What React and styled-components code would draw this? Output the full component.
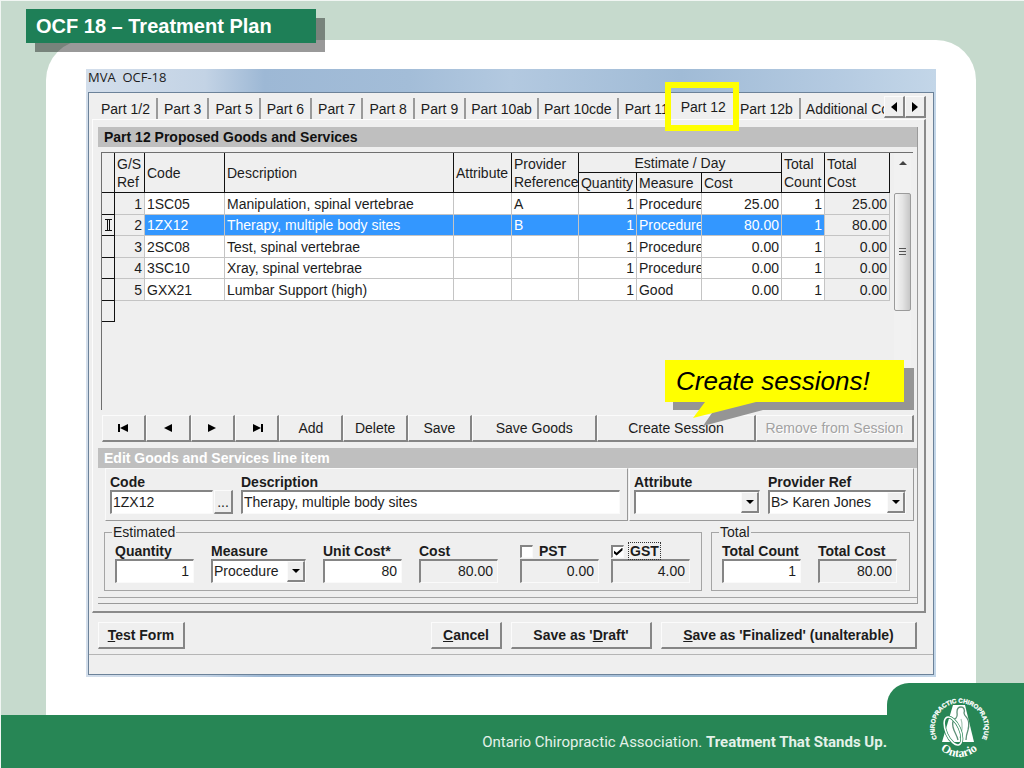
import React, { useState } from 'react';
import styled, { createGlobalStyle, css } from 'styled-components';

const GlobalStyle = createGlobalStyle`
*{box-sizing:border-box;}
body{
  margin:0;
  color:#1c1c1c;
  font-family:"Liberation Sans",Arial,sans-serif;
  font-size:14px;
  line-height:16px;
}
button,input,select{
  font:inherit;
  color:inherit;
  margin:0;
}
`;

const raised = css`
border:1px solid #fbfbfb;
border-right:2px solid #858585;
border-bottom:2px solid #858585;
background:#efefef;
`;
const sunken = css`
border:1px solid #fafafa;
border-left:2px solid #858585;
border-top:2px solid #858585;
`;

const Slide = styled.div`
min-height:100vh;
display:flex;
flex-direction:column;
background:#c6dacd;
border-top:1px solid #f1f6f3;
border-left:1px solid #f1f6f3;
`;
const SlideTitle = styled.h1`
position:relative;
z-index:1;
align-self:flex-start;
width:290px;
margin:8px 0 0 25px;
padding:0 10px;
background:#1e7f57;
box-shadow:9px 9px 0 rgba(0,0,0,0.4);
color:#fff;
font-size:20px;
line-height:34px;
`;
const Sheet = styled.main`
flex:1;
margin:-3px 48px 0 45px;
padding:29px 40px 38px;
background:#fff;
border-radius:40px 40px 0 0;
`;

const Window = styled.div`
padding:0 2px 2px;
background:linear-gradient(90deg,#d3deeb 0,#c3d3e5 14%,#9db8d5 21%,#a3bdd8 38%,#b3c9e0 50%,#a0bbd6 70%,#b4cae1 88%,#c3d6e8 100%);
`;
const TitleBar = styled.div`
height:23px;
white-space:pre;
font-family:"Open Sans","Noto Sans",sans-serif;
font-size:13px;
line-height:17px;
`;
const WindowBody = styled.div`
border:1px solid #6c8299;
background:#efefef;
`;

const TabStrip = styled.div`
display:flex;
height:26px;
padding:3px 7px 0 6px;
`;
const TabList = styled.div`
flex:1;
display:flex;
min-width:0;
padding-top:2px;
overflow-x:clip;
`;
const Tab = styled.button`
flex:none;
height:21px;
padding:${(p) => (p.$tight ? "0 5px" : "0 6px")};
border:0;
border-right:2px solid ${(p) => (p.$active ? "#efefef" : "#9a9a9a")};
background:#efefef;
white-space:nowrap;
${(p) => p.$active && css`
position:relative;
z-index:1;
height:24px;
margin:-3px -3px 0 -5px;
padding:0 9px 1px;
&::after{
  content:"";
  position:absolute;
  inset:-13px -4px -12px -7px;
  border:6px solid #ffff00;
  pointer-events:none;
}
`}
`;
const TabScroll = styled.button`
${raised}
width:21px;
height:22px;
padding:0;
display:grid;
place-items:center;
`;

const TabPage = styled.div`
margin:0 7px 0 3px;
padding:7px 6px 7px 5px;
border:1px solid #fdfdfd;
border-right:2px solid #8a8a8a;
border-bottom:2px solid #8a8a8a;
`;
const Group = styled.section`
padding-bottom:5px;
border-right:1px solid #9a9a9a;
border-bottom:1px solid #9a9a9a;
`;
const Band = styled.h2`
margin:0;
padding:0 6px;
background:#bfbfbf;
color:${(p) => (p.$light ? "#fff" : "#111")};
font-size:14px;
line-height:20px;
`;

const GridArea = styled.div`
position:relative;
display:flex;
align-items:flex-start;
height:258px;
margin:5px 4px 0 3px;
border-top:1px solid #6f6f6f;
border-left:1px solid #6f6f6f;
`;
const Grid = styled.table`
flex:1;
width:100%;
border-collapse:separate;
border-spacing:0;
table-layout:fixed;
`;
const Th = styled.th`
height:20px;
padding:0 2px;
border-right:1px solid #111;
border-bottom:1px solid #111;
font-weight:400;
line-height:18px;
text-align:${(p) => p.$align || "left"};
white-space:nowrap;
`;
const Row = styled.tr`
height:21px;
&:nth-child(odd){height:22px;}
`;
const Td = styled.td`
padding:0 2px;
border-right:1px solid #c4c4c4;
border-bottom:1px solid #c4c4c4;
background:${(p) => (p.$selected ? "#3397ff" : p.$locked ? "#efefef" : "#fff")};
color:${(p) => (p.$selected ? "#fff" : "inherit")};
line-height:20px;
text-align:${(p) => p.$align || "left"};
white-space:nowrap;
overflow:hidden;
`;
const Marker = styled.td`
padding:0;
border-right:1px solid #111;
border-bottom:1px solid #111;
line-height:0;
text-align:center;
`;

const ScrollBar = styled.div`
align-self:stretch;
width:17px;
margin:0 2px 0 4px;
padding-top:8px;
display:flex;
flex-direction:column;
align-items:center;
gap:28px;
background:#f1f1f1;
`;
const Thumb = styled.div`
width:17px;
height:118px;
display:grid;
place-items:center;
border:1px solid #9b9b9b;
border-radius:2px;
background:linear-gradient(90deg,#f4f4f4,#e4e4e4 50%,#c6c6c6);
`;

const Callout = styled.div`
position:absolute;
top:207px;
right:-1px;
width:249px;
height:64px;
pointer-events:none;
svg{display:block;}
`;
const CalloutText = styled.p`
position:absolute;
top:0;
left:11px;
margin:0;
color:#000;
font-size:26px;
font-style:italic;
line-height:42px;
`;

const Toolbar = styled.div`
display:flex;
margin:5px 3px 6px 4px;
`;
const ToolButton = styled.button`
${raised}
flex:1 1 ${(p) => p.$width}px;
min-width:0;
height:27px;
padding:0;
white-space:nowrap;
&:disabled{
  color:#a2a2a2;
  text-shadow:1px 1px 0 #fff;
}
`;

const EditArea = styled.div`
padding-bottom:6px;
border-bottom:1px solid #a5a5a5;
`;
const PanelRow = styled.div`
display:flex;
gap:1px;
margin:0 3px 0 7px;
`;
const Panel = styled.div`
flex:${(p) => (p.$width ? "none" : 1)};
width:${(p) => (p.$width ? p.$width + "px" : "auto")};
display:flex;
align-items:flex-end;
gap:8px;
padding:5px 7px 6px 4px;
border:1px solid #fafafa;
border-right-color:#999;
border-bottom-color:#999;
`;
const Boxes = styled.div`
display:flex;
gap:9px;
margin:3px 7px 0 6px;
`;
const Box = styled.fieldset`
flex:${(p) => (p.$width ? "none" : 1)};
width:${(p) => (p.$width ? p.$width + "px" : "auto")};
min-width:0;
margin:0;
padding:3px 11px 7px 10px;
border:1px solid #a5a5a5;
`;
const Legend = styled.legend`
margin-left:-3px;
padding:0 1px;
`;
const Fields = styled.div`
display:flex;
gap:17px;
`;
const TaxFields = styled.div`
display:flex;
gap:12px;
margin-left:auto;
`;
const Field = styled.div`
flex:${(p) => (p.$width ? "none" : 1)};
width:${(p) => (p.$width ? p.$width + "px" : "auto")};
min-width:0;
`;
const Label = styled.label`
display:block;
height:16px;
font-weight:700;
line-height:16px;
white-space:nowrap;
`;
const Input = styled.input`
${sunken}
display:block;
width:100%;
height:24px;
padding:0 4px 1px 1px;
border-radius:0;
background:${(p) => (p.readOnly ? "#efefef" : "#fff")};
text-align:${(p) => p.$align || "left"};
outline:none;
`;
const Lookup = styled.div`
display:flex;
gap:1px;
`;
const LookupButton = styled.button`
${raised}
flex:none;
width:19px;
height:24px;
padding:0;
`;
const SelectWrap = styled.div`
${sunken}
display:grid;
height:24px;
background:#fff;
`;
const SelectInput = styled.select`
grid-area:1/1;
width:100%;
padding:0 0 1px 1px;
border:0;
border-radius:0;
background:transparent;
appearance:none;
outline:none;
`;
const SelectArrow = styled.span`
${raised}
grid-area:1/1;
justify-self:end;
width:18px;
display:grid;
place-items:center;
pointer-events:none;
`;
const CheckRow = styled.label`
display:flex;
align-items:center;
gap:5px;
height:16px;
font-weight:700;
`;
const CheckInput = styled.input`
${sunken}
appearance:none;
display:grid;
place-content:center;
width:13px;
height:13px;
background:#fff;
&:checked::before{
  content:"";
  width:9px;
  height:8px;
  background:#000;
  clip-path:polygon(0 35%,35% 65%,100% 0,100% 35%,35% 100%,0 70%);
}
`;
const CheckText = styled.span`
padding:0 1px;
outline:${(p) => (p.$focused ? "1px dotted #333" : "none")};
`;

const Actions = styled.div`
display:flex;
justify-content:flex-end;
gap:9px;
margin:9px 16px 5px 9px;
`;
const Action = styled.button`
${raised}
width:${(p) => p.$width}px;
height:27px;
margin-right:${(p) => (p.$first ? "auto" : "0")};
padding:0;
font-weight:700;
white-space:nowrap;
`;
const StatusBar = styled.div`
height:20px;
border-top:1px solid #b5b5b5;
`;

const Footer = styled.footer`
display:flex;
align-items:flex-start;
justify-content:flex-end;
height:53px;
background:#278655;
color:#e4f1e9;
font-family:Roboto,"Liberation Sans",sans-serif;
font-size:15px;
`;
const Tagline = styled.p`
margin:19px 0 0;
`;
const Badge = styled.div`
width:137px;
height:85px;
margin-top:-32px;
padding:8px 0 0 37px;
border-radius:22px 0 0 0;
background:#278655;
`;

const tabs = ["Part 1/2", "Part 3", "Part 5", "Part 6", "Part 7", "Part 8", "Part 9", "Part 10ab", "Part 10cde", "Part 11", "Part 12", "Part 12b", "Additional Comments"];

const columns = [13, 30, 80, null, 58, 67, 58, 65, 80, 43, 65];

const lines = [
  { ref: 1, code: "1SC05", desc: "Manipulation, spinal vertebrae", provider: "A", measure: "Procedure", cost: "25.00" },
  { ref: 2, code: "1ZX12", desc: "Therapy, multiple body sites", provider: "B", measure: "Procedure", cost: "80.00" },
  { ref: 3, code: "2SC08", desc: "Test, spinal vertebrae", provider: "", measure: "Procedure", cost: "0.00" },
  { ref: 4, code: "3SC10", desc: "Xray, spinal vertebrae", provider: "", measure: "Procedure", cost: "0.00" },
  { ref: 5, code: "GXX21", desc: "Lumbar Support (high)", provider: "", measure: "Good", cost: "0.00" },
];

const Triangle = ({ dir, bar }) => (
  <svg width="14" height="10" viewBox="0 0 14 10" aria-hidden="true">
    <g transform={dir === "left" ? "translate(14 0) scale(-1 1)" : undefined} fill="#000">
      <path d="M3 1 L11 5 L3 9 Z" />
      {bar && <path d="M11 1h2v8h-2z" />}
    </g>
  </svg>
);

// the tab scrollers use a taller, narrower arrow than the record navigator
const ScrollTriangle = ({ dir }) => (
  <svg width="8" height="12" viewBox="0 0 8 12" aria-hidden="true">
    <path d={dir === "left" ? "M7 1v10L1 6z" : "M1 1v10l6-5z"} fill="#000" />
  </svg>
);

const DownArrow = () => (
  <svg width="8" height="4" viewBox="0 0 8 4" aria-hidden="true">
    <path d="M0 0h8L4 4z" fill="#000" />
  </svg>
);

const Select = ({ id, options }) => (
  <SelectWrap>
    <SelectInput id={id} defaultValue={options[0]}>
      {options.map((o) => <option key={o}>{o}</option>)}
    </SelectInput>
    <SelectArrow><DownArrow /></SelectArrow>
  </SelectWrap>
);

const NumberField = ({ id, label, value, locked }) => (
  <Field $width={79}>
    <Label htmlFor={id}>{label}</Label>
    <Input id={id} $align="right" defaultValue={value} readOnly={locked} />
  </Field>
);

const TaxField = ({ id, label, value, checked, focused }) => {
  const [on, setOn] = useState(checked);
  return (
    <Field $width={79}>
      <CheckRow>
        <CheckInput type="checkbox" checked={on} onChange={() => setOn(!on)} />
        <CheckText $focused={focused}>{label}</CheckText>
      </CheckRow>
      <Input id={id} aria-label={label + " amount"} $align="right" defaultValue={value} readOnly />
    </Field>
  );
};

const Logo = () => (
  <svg width="70" height="72" viewBox="0 0 70 72" role="img" aria-label="Ontario Chiropractic">
    <defs>
      <path id="ring" d="M13.4 48.5 A25 25 0 1 1 57.6 48.5" />
      <path id="base" d="M12 55 Q35 77 58 55" />
    </defs>
    <path d="M29 14h12l9 37H18z" fill="#fff" />
    <path d="M33 21c0-3 1-5 4-5s4 3 3 6c0 2 1 3 3 5 2 3 2 8 1 12-1 3-2 6-2 10" fill="none" stroke="#5c8f76" strokeWidth="1.3" />
    <path d="M33 21c0 3 1 4-1 6-3 2-4 5-3 9 1 5 4 8 5 13" fill="none" stroke="#5c8f76" strokeWidth="1.3" />
    <path d="M37 28c2 6 1 13-1 19" fill="none" stroke="#a9c6b6" strokeWidth="1.2" />
    <ellipse cx="29" cy="40" rx="7" ry="15" transform="rotate(-24 29 40)" fill="none" stroke="#278655" strokeWidth="3" />
    <ellipse cx="29" cy="40" rx="7" ry="15" transform="rotate(-24 29 40)" fill="none" stroke="#fff" strokeWidth="1.6" />
    <text fill="#fff" stroke="#fff" strokeWidth="0.3" fontFamily="Liberation Sans, sans-serif" fontSize="6.2" fontWeight="700">
      <textPath href="#ring" startOffset="50%" textAnchor="middle">CHIROPRACTIC CHIROPRATIQUE</textPath>
    </text>
    <text fill="#fff" fontFamily="Liberation Serif, serif" fontSize="12" fontWeight="700">
      <textPath href="#base" startOffset="50%" textAnchor="middle">Ontario</textPath>
    </text>
  </svg>
);

const GoodsGrid = () => {
  const [selected, setSelected] = useState(2);
  return (
    <Grid>
      <colgroup>
        {columns.map((w, i) => <col key={i} style={w ? { width: w } : undefined} />)}
      </colgroup>
      <thead>
        <tr>
          <Th rowSpan={2} aria-label="Selected" />
          <Th rowSpan={2}>G/S<br />Ref</Th>
          <Th rowSpan={2}>Code</Th>
          <Th rowSpan={2}>Description</Th>
          <Th rowSpan={2}>Attribute</Th>
          <Th rowSpan={2}>Provider<br />Reference</Th>
          <Th colSpan={3} $align="center">Estimate / Day</Th>
          <Th rowSpan={2}>Total<br />Count</Th>
          <Th rowSpan={2}>Total<br />Cost</Th>
        </tr>
        <tr>
          <Th>Quantity</Th>
          <Th>Measure</Th>
          <Th>Cost</Th>
        </tr>
      </thead>
      <tbody>
        {lines.map((l) => {
          const on = l.ref === selected;
          return (
            <Row key={l.ref} onClick={() => setSelected(l.ref)}>
              <Marker>
                {on && (
                  <svg width="9" height="14" viewBox="0 0 9 14">
                    <path d="M1 1.5h7M1 12.5h7M3.5 2v10M5.5 2v10" stroke="#111" fill="none" />
                  </svg>
                )}
              </Marker>
              <Td $locked $align="right">{l.ref}</Td>
              <Td $selected={on}>{l.code}</Td>
              <Td $selected={on}>{l.desc}</Td>
              <Td $selected={on} />
              <Td $selected={on}>{l.provider}</Td>
              <Td $selected={on} $align="right">1</Td>
              <Td $selected={on}>{l.measure}</Td>
              <Td $selected={on} $align="right">{l.cost}</Td>
              <Td $selected={on} $align="right">1</Td>
              <Td $locked $align="right">{l.cost}</Td>
            </Row>
          );
        })}
        <Row><Marker /></Row>
      </tbody>
    </Grid>
  );
};

const App = () => {
  const [active, setActive] = useState("Part 12");
  return (
    <Slide>
      <GlobalStyle />
      <SlideTitle>OCF 18 – Treatment Plan</SlideTitle>
      <Sheet>
        <Window>
          <TitleBar>MVA  OCF-18</TitleBar>
          <WindowBody>
            <TabStrip>
              <TabList role="tablist">
                {tabs.map((t) => (
                  <Tab
                    key={t}
                    role="tab"
                    aria-selected={t === active}
                    $active={t === active}
                    $tight={t.length > 8}
                    onClick={() => setActive(t)}
                  >
                    {t}
                  </Tab>
                ))}
              </TabList>
              <TabScroll aria-label="Previous tabs"><ScrollTriangle dir="left" /></TabScroll>
              <TabScroll aria-label="Next tabs"><ScrollTriangle dir="right" /></TabScroll>
            </TabStrip>

            <TabPage>
              <Group>
                <Band>Part 12 Proposed Goods and Services</Band>
                <GridArea>
                  <GoodsGrid />
                  <ScrollBar>
                    <svg width="8" height="4" viewBox="0 0 8 4"><path d="M0 4h8L4 0z" fill="#444" /></svg>
                    <Thumb>
                      <svg width="7" height="8" viewBox="0 0 7 8"><path d="M0 .5h7M0 3.5h7M0 6.5h7" stroke="#555" /></svg>
                    </Thumb>
                  </ScrollBar>
                  <Callout>
                    <svg width="249" height="66" viewBox="0 0 249 66">
                      <path d="M8 8H249V50H98L38 66L49 50H8Z" fill="#959595" />
                      <path d="M0 0H239V42H91L28 58L40 42H0Z" fill="#ffff00" />
                    </svg>
                    <CalloutText>Create sessions!</CalloutText>
                  </Callout>
                </GridArea>
                <Toolbar>
                  <ToolButton $width={44} aria-label="First"><Triangle dir="left" bar /></ToolButton>
                  <ToolButton $width={44} aria-label="Previous"><Triangle dir="left" /></ToolButton>
                  <ToolButton $width={44} aria-label="Next"><Triangle dir="right" /></ToolButton>
                  <ToolButton $width={44} aria-label="Last"><Triangle dir="right" bar /></ToolButton>
                  <ToolButton $width={64}>Add</ToolButton>
                  <ToolButton $width={64}>Delete</ToolButton>
                  <ToolButton $width={64}>Save</ToolButton>
                  <ToolButton $width={125}>Save Goods</ToolButton>
                  <ToolButton $width={158}>Create Session</ToolButton>
                  <ToolButton $width={158} disabled>Remove from Session</ToolButton>
                </Toolbar>

                <EditArea>
                  <Band $light>Edit Goods and Services line item</Band>
                  <PanelRow>
                    <Panel>
                      <Field $width={123}>
                        <Label htmlFor="code">Code</Label>
                        <Lookup>
                          <Input id="code" defaultValue="1ZX12" />
                          <LookupButton aria-label="Look up code">...</LookupButton>
                        </Lookup>
                      </Field>
                      <Field>
                        <Label htmlFor="description">Description</Label>
                        <Input id="description" defaultValue="Therapy, multiple body sites" />
                      </Field>
                    </Panel>
                    <Panel $width={285}>
                      <Field $width={126}>
                        <Label htmlFor="attribute">Attribute</Label>
                        <Select id="attribute" options={[""]} />
                      </Field>
                      <Field>
                        <Label htmlFor="provider">Provider Ref</Label>
                        <Select id="provider" options={["B> Karen Jones"]} />
                      </Field>
                    </Panel>
                  </PanelRow>
                  <Boxes>
                    <Box>
                      <Legend>Estimated</Legend>
                      <Fields>
                        <NumberField id="quantity" label="Quantity" value="1" />
                        <Field $width={95}>
                          <Label htmlFor="measure">Measure</Label>
                          <Select id="measure" options={["Procedure", "Good"]} />
                        </Field>
                        <NumberField id="unitcost" label="Unit Cost*" value="80" />
                        <NumberField id="cost" label="Cost" value="80.00" locked />
                        <TaxFields>
                          <TaxField id="pst" label="PST" value="0.00" checked={false} />
                          <TaxField id="gst" label="GST" value="4.00" checked focused />
                        </TaxFields>
                      </Fields>
                    </Box>
                    <Box $width={199}>
                      <Legend>Total</Legend>
                      <Fields>
                        <NumberField id="totalcount" label="Total Count" value="1" />
                        <NumberField id="totalcost" label="Total Cost" value="80.00" locked />
                      </Fields>
                    </Box>
                  </Boxes>
                </EditArea>
              </Group>
            </TabPage>

            <Actions>
              <Action $width={87} $first><u>T</u>est Form</Action>
              <Action $width={71}><u>C</u>ancel</Action>
              <Action $width={141}>Save as '<u>D</u>raft'</Action>
              <Action $width={256}><u>S</u>ave as 'Finalized' (unalterable)</Action>
            </Actions>
            <StatusBar />
          </WindowBody>
        </Window>
      </Sheet>
      <Footer>
        <Tagline>Ontario Chiropractic Association. <b>Treatment That Stands Up.</b></Tagline>
        <Badge><Logo /></Badge>
      </Footer>
    </Slide>
  );
};

export default App;
